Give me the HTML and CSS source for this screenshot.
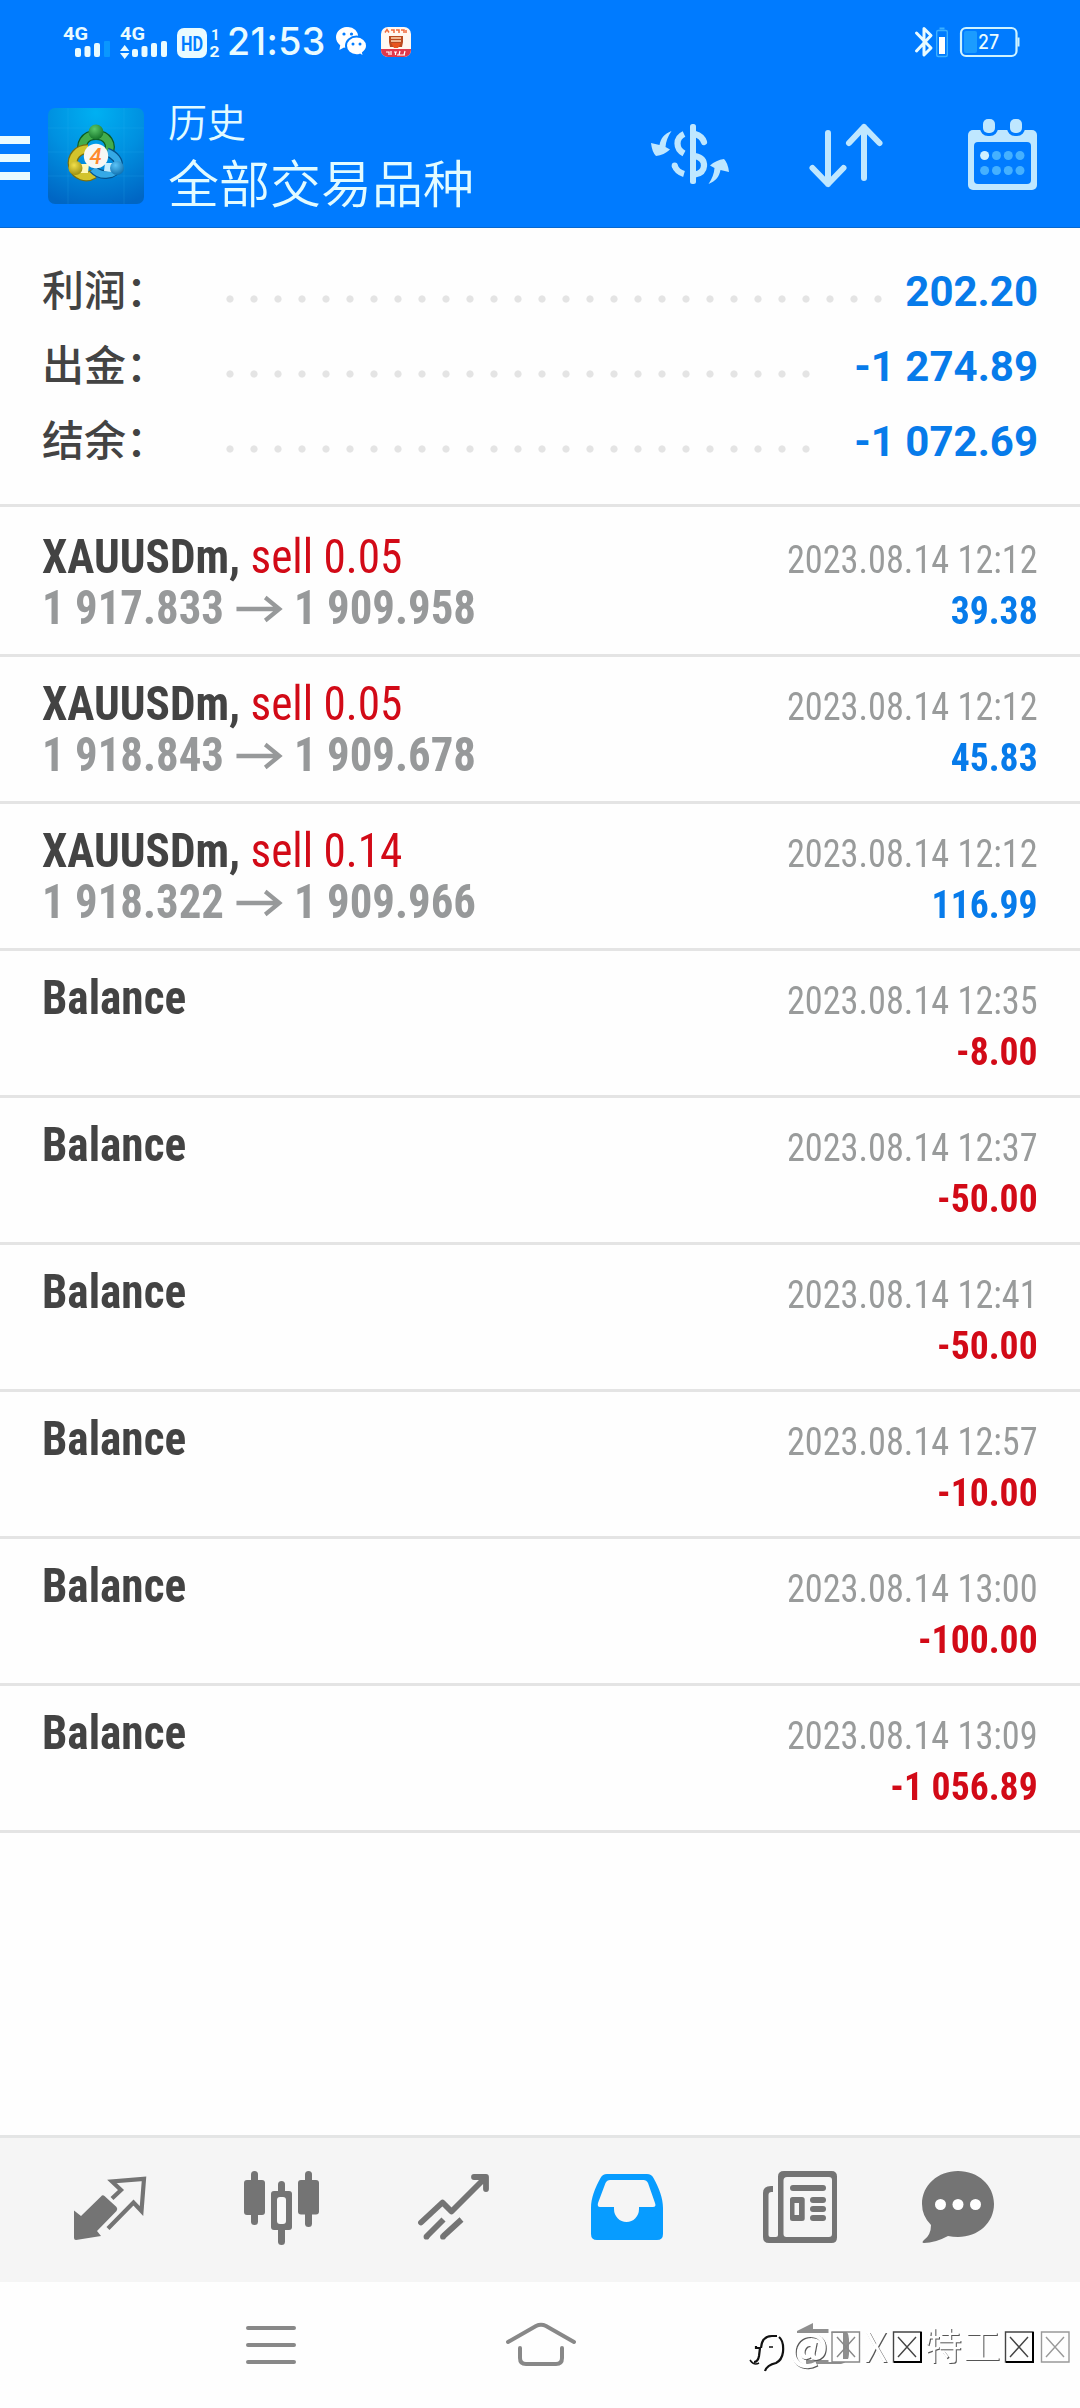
FILE: index.html
```
<!DOCTYPE html>
<html lang="zh-CN">
<head>
<meta charset="utf-8">
<title>历史</title>
<link rel="stylesheet" href="styles.css">
</head>
<body>
<div class="screen">
  <header class="header">
    <div class="statusbar">
      <svg class="signals" viewBox="60 22 162 38" width="162" height="38">
        <g fill="#e9fbff" font-family="Roboto, sans-serif" font-weight="700">
          <text x="63" y="39" font-size="18" textLength="25" lengthAdjust="spacingAndGlyphs">4G</text>
          <rect x="75" y="47" width="6" height="9" rx="2"/><rect x="84.500" y="45" width="6" height="11" rx="2"/><rect x="94" y="42" width="6" height="14" rx="2"/>
          <rect x="104" y="40" width="6" height="16" rx="1" fill="#0a97ff"/>
          <text x="120" y="39" font-size="18" textLength="25" lengthAdjust="spacingAndGlyphs">4G</text>
          <path d="M120 50l4.700-6 4.700 6zM120 52h9.400l-4.700 6z"/>
          <rect x="132" y="48" width="6" height="8" rx="2"/><rect x="141.500" y="45" width="6" height="11" rx="2"/><rect x="151" y="42" width="6" height="14" rx="2"/><rect x="161" y="40" width="6" height="16" rx="2"/>
          <rect x="177" y="27" width="30" height="30" rx="7"/>
          <text x="181" y="49.500" font-size="20" textLength="22" lengthAdjust="spacingAndGlyphs" fill="#007bff">HD</text>
          <text x="211" y="39" font-size="15">1</text>
          <text x="209.500" y="56" font-size="15" textLength="10" lengthAdjust="spacingAndGlyphs">2</text>
        </g>
      </svg>
      <span class="clock">21:53</span>
      <svg class="wechat" viewBox="336 26 31 32" width="31" height="32">
        <path fill="#fff" d="M347.500 27c-6.500 0-11.500 4.500-11.500 10.300 0 3.300 1.600 6 4.200 8l-.8 4.700 4.600-2.400c1.300.3 2.500.5 3.600.5z"/>
        <circle cx="348" cy="37.500" r="10.500" fill="#fff"/>
        <path fill="#fff" stroke="#007bff" stroke-width="2" d="M356.500 36.500c-5.800 0-10.500 4-10.500 9.300 0 5.400 4.700 9.400 10.500 9.400 1.200 0 2.500-.2 3.500-.6l4 2.400-1-4.200c2.500-1.900 4-4.200 4-7 0-5.300-4.700-9.300-10.500-9.300z"/>
        <g fill="#007bff"><circle cx="344" cy="34" r="1.600"/><circle cx="351.500" cy="34" r="1.600"/><circle cx="353" cy="44" r="1.500"/><circle cx="360" cy="44" r="1.500"/></g>
      </svg>
      <svg class="truck" viewBox="381 27 30 30" width="30" height="30">
        <rect x="381" y="27" width="30" height="30" rx="7" fill="#fff7f1"/>
        <path d="M381 49h30v1a7 7 0 0 1-7 7h-16a7 7 0 0 1-7-7z" fill="#e0394d"/>
        <path d="M385 32.500l2-3 2 3M391 30h3v3M396 30h3v3M401 30h3v3M406 30v3" stroke="#ef6a3c" stroke-width="1.500" fill="none"/>
        <path d="M389 36h14v6l-1 5h-12l-1-5z" fill="#b9491f"/><path d="M391 38h10M391 41h10" stroke="#ffd9b8" stroke-width="1.300"/><path d="M391 43h10l-3 5h-4z" fill="#e8541e"/>
        <path d="M386 52h3v3M391 51v4M394 52h3M395.500 52v3M400 51l-1 4M405 51l-1 4M397 55h8" stroke="#fff" stroke-width="1.200" fill="none"/>
      </svg>
      <svg class="power" viewBox="914 26 107 32" width="107" height="32">
        <path d="M916.500 33l14.500 15-7 7V28.500l7 7L916.500 51" fill="none" stroke="#e9fbff" stroke-width="3" stroke-linecap="round" stroke-linejoin="round"/>
        <rect x="936.700" y="30.500" width="10.600" height="26" rx="1.500" fill="none" stroke="#3bb0ff" stroke-width="1.400"/><path d="M939.500 28.500h5" stroke="#3bb0ff" stroke-width="2"/>
        <rect x="939" y="37" width="6" height="17" fill="#fff"/>
        <rect x="961" y="28" width="55.500" height="28" rx="5" fill="none" stroke="#cff3ff" stroke-width="2.200"/>
        <rect x="964" y="31" width="13" height="22" rx="2" fill="#1b9cff"/>
        <path d="M1018.500 37.500v9" stroke="#cff3ff" stroke-width="2"/>
        <text x="978" y="49" font-family="Inter, sans-serif" font-size="19.500" font-weight="500" textLength="21" lengthAdjust="spacingAndGlyphs" fill="#e9fbff">27</text>
      </svg>
    </div>
    <div class="appbar">
      <div class="menu"><i></i><i></i><i></i></div>
      <svg class="logo" viewBox="48 108 96 96" width="96" height="96">
        <defs>
          <radialGradient id="sky" cx=".5" cy=".05" r="1"><stop offset="0" stop-color="#00b0f2"/><stop offset=".5" stop-color="#0090e0"/><stop offset="1" stop-color="#0066c4"/></radialGradient>
          <radialGradient id="green" cx=".4" cy=".3" r=".8"><stop offset="0" stop-color="#5cc86a"/><stop offset="1" stop-color="#0d6a22"/></radialGradient>
          <radialGradient id="gold" cx=".4" cy=".3" r=".8"><stop offset="0" stop-color="#f2e04a"/><stop offset="1" stop-color="#93860b"/></radialGradient>
          <radialGradient id="blue" cx=".4" cy=".3" r=".8"><stop offset="0" stop-color="#5cc4f8"/><stop offset="1" stop-color="#0768a8"/></radialGradient>
        </defs>
        <rect x="48" y="108" width="96" height="96" rx="7" fill="url(#sky)"/>
        <path d="M48 128h96M48 152h96M48 176h96M68 108v96M124 108v96" stroke="#38b4f0" stroke-width=".5" opacity=".35"/>
        <path d="M84 154c-5-10 1-19 12-19s17 9 12 19" fill="none" stroke="#0b5c24" stroke-width="10"/>
        <path d="M84 154c-5-10 1-19 12-19s17 9 12 19" fill="none" stroke="#43ad4c" stroke-width="7.500"/>
        <path d="M88 149c-10 0-17 8-15 17 3 10 13 13 21 8" fill="none" stroke="#776e10" stroke-width="10"/>
        <path d="M88 149c-10 0-17 8-15 17 3 10 13 13 21 8" fill="none" stroke="#d3c42c" stroke-width="7.500"/>
        <path d="M107 152c8 3 13 9 11 15-3 8-17 11-25 2" fill="none" stroke="#05528b" stroke-width="9"/>
        <path d="M107 152c8 3 13 9 11 15-3 8-17 11-25 2" fill="none" stroke="#35a9e6" stroke-width="6.500"/>
        <circle cx="96" cy="132" r="7.500" fill="url(#green)"/><path d="M81 164h8l-1 9h-8z" fill="#fff8b8"/><path d="M105 163h7v9l-8-1z" fill="#c6edff"/>
        <circle cx="75.500" cy="168" r="7" fill="url(#gold)"/><circle cx="117" cy="168" r="7" fill="url(#blue)"/>
        <circle cx="96" cy="156" r="12.200" fill="#f7f7f4"/>
        <text x="89.500" y="163.500" font-family="Roboto, sans-serif" font-size="22" font-style="italic" font-weight="500" fill="#ff8a2c">4</text>
      </svg>
      <div class="titles"><div class="section">历史</div><div class="filter">全部交易品种</div></div>
      <svg class="action dollar" viewBox="650 118 80 73" width="80" height="73">
        <rect x="690" y="124" width="6" height="60" rx="2.500" fill="#bfe7ff"/>
        <g fill="none" stroke="#bfe7ff" stroke-width="6.200"><path d="M684 134Q677.500 137 677.500 143.500Q677.500 150 684 153.500"/><path d="M695 134Q702 136 704 142" stroke-linecap="round"/><path d="M695 156Q704.500 158 704 166Q703.500 173 695 174.500"/><path d="M684 174Q677 172 674.500 165.500"/></g>
        <circle cx="674.700" cy="165.500" r="3" fill="#bfe7ff"/>
        <path id="swap" fill="#bfe7ff" d="M671.500 131C664 134 661 138 659.500 145L651 143Q652 152 656 156Q664 155 670 149.500L665.500 147Q666 139 671.500 131z"/>
        <use href="#swap" transform="rotate(180 690 157.500)"/>
      </svg>
      <svg class="action sort" viewBox="807 118 78 73" width="78" height="73">
        <path d="M828 133v51M812.500 168L828 184l15.500-16M864 178v-51M849 143l15-16 15.500 16" fill="none" stroke="#bfe7ff" stroke-width="6" stroke-linecap="round" stroke-linejoin="round"/>
      </svg>
      <svg class="action" viewBox="966 118 72 73" width="72" height="73">
        <rect x="968" y="130" width="69" height="60" rx="5" fill="#bfe7ff"/><rect x="974" y="142" width="57" height="42" rx="4" fill="#007bff"/>
        <g fill="#bfe7ff" stroke="#007bff" stroke-width="6" paint-order="stroke"><rect x="983" y="119" width="12" height="14" rx="5"/><rect x="1010" y="119" width="12" height="14" rx="5"/></g>
        <g fill="#45b1ff"><circle cx="984.600" cy="155.500" r="4.500" fill="#cff0ff"/><circle cx="996.500" cy="155.500" r="4.500"/><circle cx="1008.300" cy="155.500" r="4.500"/><circle cx="1020" cy="155.500" r="4.500"/><circle cx="984.600" cy="170.500" r="4.500"/><circle cx="996.500" cy="170.500" r="4.500"/><circle cx="1008.300" cy="170.500" r="4.500"/><circle cx="1020" cy="170.500" r="4.500"/></g>
      </svg>
    </div>
  </header>

  <section class="summary">
    <div class="total"><span class="label">利润：</span><span class="leader"></span><span class="sum">202.20</span></div>
    <div class="total"><span class="label">出金：</span><span class="leader leader-wide"></span><span class="sum">-1 274.89</span></div>
    <div class="total"><span class="label">结余：</span><span class="leader leader-wide"></span><span class="sum">-1 072.69</span></div>
  </section>

  <main class="deals">
    <div class="deal"><div class="what"><div class="name">XAUUSDm, <span class="side">sell 0.05</span></div><div class="prices">1 917.833<svg class="arrow" viewBox="0 0 50 30" width="50" height="30"><path d="M0 15H47M31 3.500L46 15 31 26.500"/></svg>1 909.958</div></div><div class="result"><div class="date">2023.08.14 12:12</div><div class="gain">39.38</div></div></div>
    <div class="deal"><div class="what"><div class="name">XAUUSDm, <span class="side">sell 0.05</span></div><div class="prices">1 918.843<svg class="arrow" viewBox="0 0 50 30" width="50" height="30"><path d="M0 15H47M31 3.500L46 15 31 26.500"/></svg>1 909.678</div></div><div class="result"><div class="date">2023.08.14 12:12</div><div class="gain">45.83</div></div></div>
    <div class="deal"><div class="what"><div class="name">XAUUSDm, <span class="side">sell 0.14</span></div><div class="prices">1 918.322<svg class="arrow" viewBox="0 0 50 30" width="50" height="30"><path d="M0 15H47M31 3.500L46 15 31 26.500"/></svg>1 909.966</div></div><div class="result"><div class="date">2023.08.14 12:12</div><div class="gain">116.99</div></div></div>
    <div class="deal"><div class="what"><div class="name">Balance</div></div><div class="result"><div class="date">2023.08.14 12:35</div><div class="gain loss">-8.00</div></div></div>
    <div class="deal"><div class="what"><div class="name">Balance</div></div><div class="result"><div class="date">2023.08.14 12:37</div><div class="gain loss">-50.00</div></div></div>
    <div class="deal"><div class="what"><div class="name">Balance</div></div><div class="result"><div class="date">2023.08.14 12:41</div><div class="gain loss">-50.00</div></div></div>
    <div class="deal"><div class="what"><div class="name">Balance</div></div><div class="result"><div class="date">2023.08.14 12:57</div><div class="gain loss">-10.00</div></div></div>
    <div class="deal"><div class="what"><div class="name">Balance</div></div><div class="result"><div class="date">2023.08.14 13:00</div><div class="gain loss">-100.00</div></div></div>
    <div class="deal"><div class="what"><div class="name">Balance</div></div><div class="result"><div class="date">2023.08.14 13:09</div><div class="gain loss">-1 056.89</div></div></div>
  </main>

  <nav class="tabs">
    <svg viewBox="24 2138 172 144"><path d="M74 2210.500L81 2216 101 2196.500Q102.500 2194.500 104.500 2196L116.500 2207Q118 2209 116.500 2211L97 2231 101 2236 76 2240Q74 2240 74 2238z" fill="#747474"/><path d="M112 2198.500L121 2190 112 2181.500 144 2178.800 141.500 2211 133.500 2202.500 108 2228.500" fill="none" stroke="#747474" stroke-width="4.200"/></svg>
    <svg viewBox="196 2138 172 144"><g fill="#747474"><rect x="251" y="2171" width="7" height="54" rx="3.500"/><rect x="244" y="2180" width="21" height="35" rx="3"/><rect x="278" y="2181" width="7" height="64" rx="3.500"/><rect x="271" y="2191" width="21" height="39" rx="3"/><rect x="305" y="2171" width="7" height="56" rx="3.500"/><rect x="298" y="2180" width="21" height="34.500" rx="3"/></g><rect x="277" y="2197" width="9" height="27" rx="3" fill="#f8f8f8"/></svg>
    <svg viewBox="368 2138 172 144"><g fill="none" stroke="#747474" stroke-width="5.800"><path d="M421 2222.500L442.500 2202.500 451.500 2211.500 485.500 2177.500M474 2177H486V2189" stroke-linecap="round" stroke-linejoin="round"/><path d="M427 2236L443.500 2219.500M443.500 2236L461.500 2219.500"/></g><circle cx="426.500" cy="2236.700" r="2.900" fill="#747474"/><circle cx="443" cy="2236.700" r="2.900" fill="#747474"/></svg>
    <svg viewBox="540 2138 172 144"><path fill="#079cff" fill-rule="evenodd" d="M607 2174H647Q651.500 2174 653.500 2178C659 2188 663 2198 663 2208V2234Q663 2240 657 2240H597Q591 2240 591 2234V2208C591 2198 595 2188 600.500 2178Q602.500 2174 607 2174zM610 2180Q607 2180 605.500 2183L598 2203Q597 2207 600 2207H614V2209A12.500 13 0 0 0 639 2209V2207H653Q656.500 2207 655 2203L648 2183Q646.500 2180 643.500 2180z"/></svg>
    <svg viewBox="712 2138 172 144"><g fill="#747474"><path fill-rule="evenodd" d="M784 2171H831.500Q837 2171 837 2176.500V2237.500Q837 2243 831.500 2243H769Q763 2243 763 2237V2193Q763 2186 771 2186H773V2192H771.500Q768.500 2192 768.500 2195V2235Q768.500 2237 770.500 2237H776Q778 2237 778 2235V2176.500Q778 2171 784 2171zM787 2177Q783.500 2177 783.500 2180.500V2234Q783.500 2237 786.500 2237H829Q832 2237 832 2234V2180Q832 2177 829 2177z"/><rect x="790" y="2185" width="36" height="6" rx="3"/><path fill-rule="evenodd" d="M792.500 2197H802Q804.700 2197 804.700 2199.500V2218.500Q804.700 2221 802 2221H792.500Q790 2221 790 2218.500V2199.500Q790 2197 792.500 2197zM794.500 2203V2215H799V2203z"/><rect x="810" y="2197" width="16" height="6" rx="3"/><rect x="810" y="2206" width="16" height="6" rx="3"/><rect x="810" y="2215" width="16" height="6" rx="3"/></g></svg>
    <svg viewBox="884 2138 172 144"><path fill="#747474" d="M958 2171C978 2171 994 2185 994 2204S978 2237 958 2237Q953 2237 948 2236Q935 2243 924 2243 Q921 2243 924 2240Q931 2235 931 2225Q922 2216 922 2204C922 2185 938 2171 958 2171z"/><g fill="#fff"><circle cx="940.500" cy="2204.500" r="5.500"/><circle cx="958" cy="2204.500" r="5.500"/><circle cx="975.500" cy="2204.500" r="5.500"/></g></svg>
  </nav>

  <footer class="sysnav">
    <svg viewBox="136 2282 270 126" width="270" height="126"><path d="M248 2328H294M248 2345H294M248 2362H294" stroke="#888" stroke-width="4" stroke-linecap="round"/></svg>
    <svg viewBox="406 2282 270 126" width="270" height="126"><path d="M508 2342L536 2326Q541 2323.500 546 2326L574 2342M520 2348V2358Q520 2364 526 2364H556Q562 2364 562 2358V2348" fill="none" stroke="#888" stroke-width="4" stroke-linecap="round"/></svg>
    <svg viewBox="676 2282 270 126" width="270" height="126"><path fill="#8f8f8f" d="M797 2331L813 2323V2329H841Q849 2331 849 2339V2354Q849 2362 841 2364H806V2360H843V2333H797z"/></svg>
    <svg class="watermark" viewBox="744 2312 336 76" width="336" height="76">
      <g class="note" fill="none" stroke-width="2.200"><path d="M754 2362Q758 2362 759 2356L760 2348H756V2346M761 2348Q762 2336 772 2336H777M779 2337Q784 2341 783 2352Q782 2360 776 2363Q767 2365 765 2371" /><path d="M769 2347H773M750 2360Q754 2366 759 2363" stroke-width="1.500"/></g>
      <g class="mark">
        <text x="790" y="2361" font-size="38" textLength="37" lengthAdjust="spacingAndGlyphs" stroke="#fff" stroke-width="2">@</text>
        <text x="864.500" y="2361.500" font-size="41" textLength="23" lengthAdjust="spacingAndGlyphs">X</text>
        <text x="925" y="2359.500" font-size="37">特</text><text x="963.500" y="2359.500" font-size="37">工</text>
      </g>
      <g class="tofu"><path stroke="#fff" stroke-width="3" d="M830 2330.500h27.500v30H830z"/><path stroke="#888" d="M832 2332h27.500v30H832zM837 2337l18 20M855 2337l-18 20"/><path d="M893.500 2332H921v30h-27.500zM898 2337l18 20M916 2337l-18 20"/><path d="M1005.500 2332H1033v30h-27.500zM1010 2337l18 20M1028 2337l-18 20"/><path d="M921 2332v30h-27M1033 2332v30h-27" stroke="#000" stroke-width="2"/><path class="faint" d="M1041.500 2332H1069v30h-27.500zM1046 2337l18 20M1064 2337l-18 20"/></g>
    </svg>
  </footer>
</div>
</body>
</html>
```
FILE: styles.css
```
* { box-sizing: border-box; }
body { margin: 0; background: #fefefe; font-family: Roboto, "Noto Sans CJK SC", sans-serif; }
svg { display: block; flex: none; }
.screen { position: relative; width: 1080px; height: 2408px; display: flex; flex-direction: column; overflow: hidden; }

.header { height: 228px; background: #007bff; color: #e2fbff; border-bottom: 1px solid #0868cf; }
.statusbar { height: 84px; display: flex; align-items: center; padding: 0 59px 0 60px; }
.clock { margin-left: 5px; width: 96px; font: 450 37.5px/40px Inter, sans-serif; letter-spacing: .4px; color: #e9fbff; white-space: nowrap; }
.wechat { margin-left: 13px; }
.truck { margin-left: 14px; }
.power { margin-left: auto; }

.appbar { height: 144px; display: flex; align-items: flex-start; padding-right: 42px; }
.menu { width: 30px; padding-top: 52px; display: flex; flex-direction: column; gap: 10px; }
.menu i { height: 8px; background: #e9fbff; }
.logo { margin: 24px 24px 0 18px; }
.titles { padding-top: 10px; font-family: "Noto Sans CJK SC", sans-serif; font-weight: 350; white-space: nowrap; }
.section { font-size: 39px; line-height: 53px; }
.filter { font-size: 51px; line-height: 68px; }
.action { margin-top: 34px; }
.dollar { margin-left: auto; }
.sort { margin: 34px 81px 0 77px; }

.summary { height: 279px; padding: 26px 42px 0; border-bottom: 3px solid #e4e4e4; }
.total { height: 75px; display: flex; align-items: baseline; line-height: 67px; }
.label { width: 176px; font: 500 42px/67px "Noto Sans CJK SC", sans-serif; color: #434343; }
.leader { flex: 1; height: 75px; align-self: flex-start; margin-right: 14px; background: radial-gradient(circle at 12px 45px, #e4e4e4 3.2px, transparent 4px) 0 0 / 24px 75px repeat-x; }
.leader-wide { margin-right: 36px; }
.sum { font-size: 42px; font-weight: 700; color: #077bea; white-space: nowrap; }

.deals { flex: 1; padding-top: 3px; font-family: "Roboto Condensed", Roboto, sans-serif; }
.deal { height: 147px; padding: 0 42px; display: flex; justify-content: space-between; border-bottom: 3px solid #e4e4e4; white-space: nowrap; }
.what { padding-top: 21px; }
.name, .prices { font-size: 48px; font-weight: 700; line-height: 51px; color: #434343; transform: scaleX(.942); transform-origin: 0 0; }
.side { font-weight: 430; color: #d20a17; }
.prices { display: flex; color: #97999a; transform: scaleX(.934); }
.arrow { margin: 12px 12px 0 13px; fill: none; stroke: #97999a; stroke-width: 4.5px; }
.result { padding-top: 25px; text-align: right; }
.date, .gain { font-size: 39px; line-height: 51px; color: #999b9b; transform: scaleX(.93); transform-origin: 100% 0; }
.gain { font-weight: 700; color: #077bea; transform: scaleX(.965); }
.gain.loss { color: #d20a17; }

.tabs { height: 147px; padding: 0 24px; display: grid; grid-template-columns: repeat(6, 172px); background: #f5f5f5; border-top: 3px solid #e4e5e5; }
.tabs svg { width: 172px; height: 144px; }
.sysnav { position: relative; height: 126px; padding-left: 136px; display: flex; }
.watermark { position: absolute; right: 0; top: 30px; }
.mark { fill: #fff; font-family: "Noto Sans CJK SC", sans-serif; font-weight: 350; filter: drop-shadow(1px 1px 0 #555); }
.note { stroke: #111; }
.tofu { fill: none; stroke: #444; stroke-width: 1.4px; }
.tofu .faint { stroke: #999; }
```
